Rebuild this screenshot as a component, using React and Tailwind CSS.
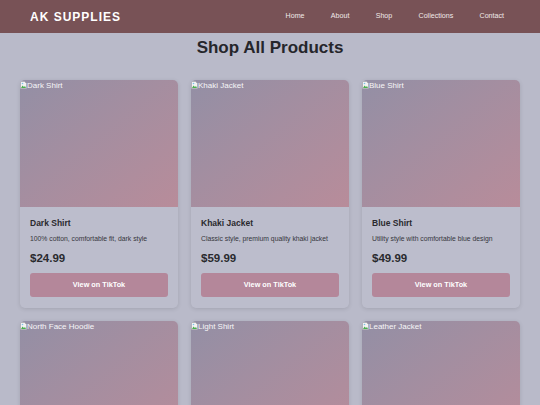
import React from "react";

const products = [
  { name: "Dark Shirt", desc: "100% cotton, comfortable fit, dark style", price: "$24.99" },
  { name: "Khaki Jacket", desc: "Classic style, premium quality khaki jacket", price: "$59.99" },
  { name: "Blue Shirt", desc: "Utility style with comfortable blue design", price: "$49.99" },
  { name: "North Face Hoodie", desc: "Warm hoodie for cold days", price: "$69.99" },
  { name: "Light Shirt", desc: "Breathable light shirt for summer", price: "$29.99" },
  { name: "Leather Jacket", desc: "Genuine leather, timeless look", price: "$89.99" },
];

function BrokenIcon() {
  return (
    <svg width="7" height="8" viewBox="0 0 14 16" className="shrink-0 mt-[1px]">
      <path d="M1 1h8l4 4v10H1z" fill="#f2f2f2" stroke="#a0a0a0" strokeWidth="1" />
      <path d="M2 14l3-5 3 3 2-2 2 4z" fill="#4caf50" />
      <circle cx="5" cy="5" r="1.6" fill="#7cc0e8" />
    </svg>
  );
}

function Card({ p }) {
  return (
    <div className="bg-[#bcbdcc] rounded-[5px] shadow-[0_1px_4px_rgba(0,0,0,0.12)] overflow-hidden">
      <div className="h-[127px] bg-gradient-to-br from-[#938fa5] to-[#b88c9a]">
        <div className="flex items-start text-[8px] leading-[12px] text-[#f6f6f8]">
          <BrokenIcon />
          <span>{p.name}</span>
        </div>
      </div>
      <div className="px-[10px] pt-[11px] pb-[11px]">
        <div className="text-[8.5px] font-bold text-[#2a2a2e] leading-[11px]">{p.name}</div>
        <div className="mt-[5px] text-[6.8px] text-[#36363c] leading-[10px]">{p.desc}</div>
        <div className="mt-[7px] text-[11.5px] font-bold text-[#2a2a2e] leading-[14px]">{p.price}</div>
        <div className="mt-[8px] h-[24px] rounded-[3px] bg-[#b4879a] flex items-center justify-center text-white text-[7.3px] font-bold">
          View on TikTok
        </div>
      </div>
    </div>
  );
}

export default function App() {
  return (
    <div className="min-h-[405px] bg-[#b9bac9] font-['Liberation_Sans',Arial,sans-serif]">
      <header className="h-[33px] bg-[#785256] flex items-center justify-between pl-[30px] pr-[36px]">
        <div className="text-white font-bold text-[12px] tracking-[1px]">AK SUPPLIES</div>
        <nav className="flex gap-[26.3px] text-[7.1px] text-[#f1eaea]">
          <span>Home</span>
          <span>About</span>
          <span>Shop</span>
          <span>Collections</span>
          <span>Contact</span>
        </nav>
      </header>
      <main className="px-[20px]">
        <h1 className="text-center font-bold text-[17px] text-[#26262b] pt-[2px] leading-[26px]">Shop All Products</h1>
        <div className="mt-[19px] grid grid-cols-3 gap-[13px]">
          {products.map((p) => (
            <Card key={p.name} p={p} />
          ))}
        </div>
      </main>
    </div>
  );
}
